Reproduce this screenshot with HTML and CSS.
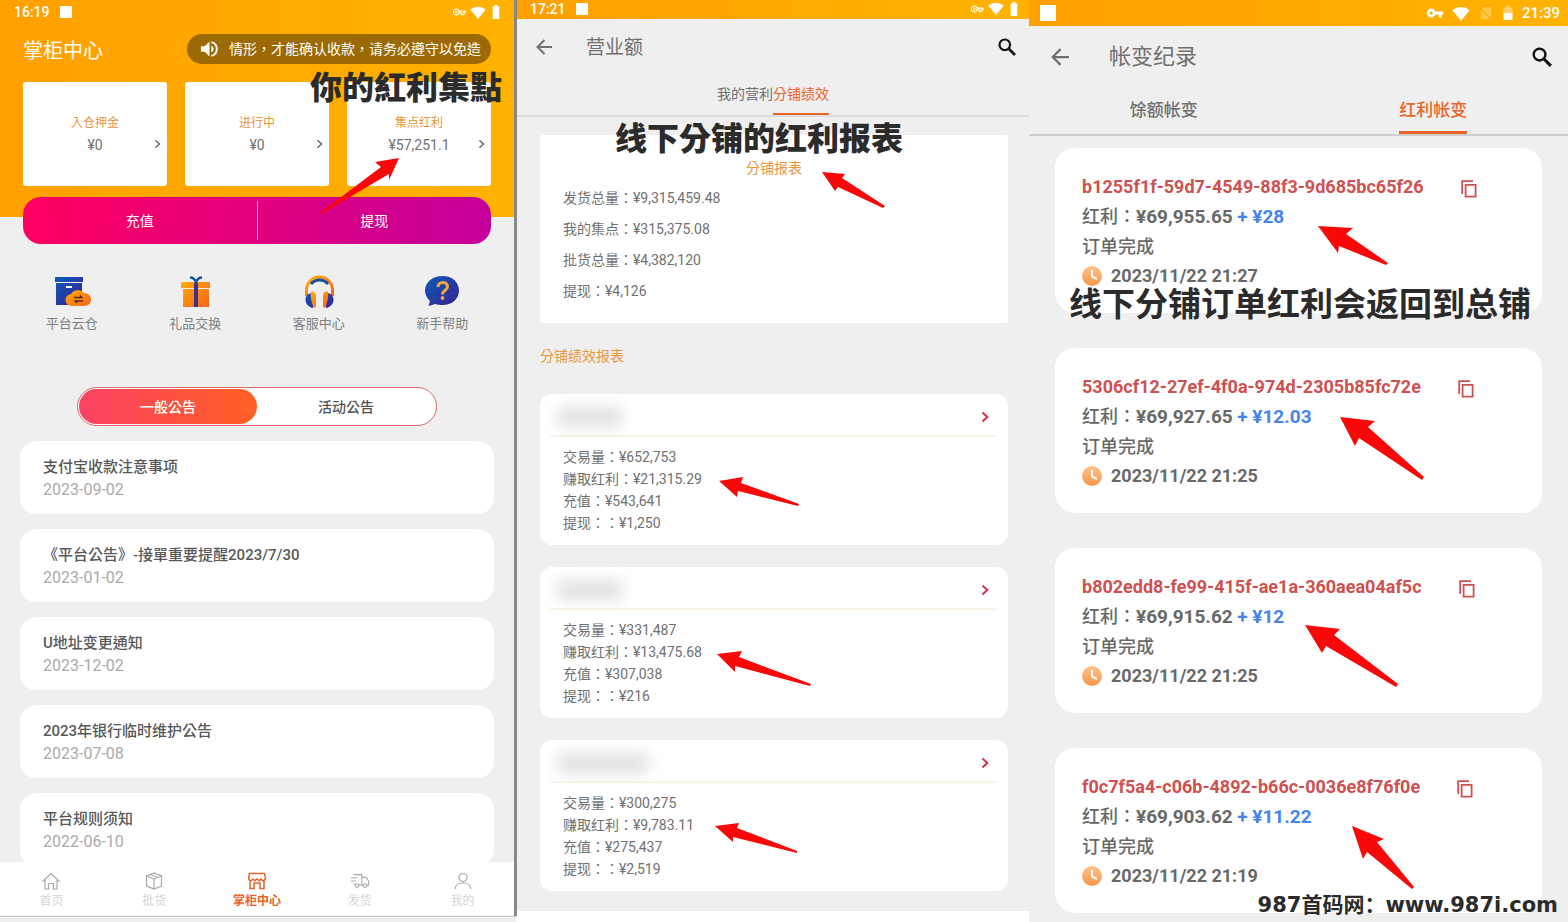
FILE: index.html
```html
<!DOCTYPE html>
<html lang="zh-TW">
<head>
<meta charset="utf-8">
<title>掌柜中心</title>
<link rel="stylesheet" href="styles.css">
</head>
<body>
<svg class="defs" aria-hidden="true">
  <defs>
    <linearGradient id="blue" x1="0" y1="0" x2="1" y2="1"><stop offset="0" stop-color="#0a5cb8"/><stop offset="1" stop-color="#3a2090"/></linearGradient>
    <linearGradient id="orange" x1="0" y1="0" x2="1" y2="1"><stop offset="0" stop-color="#ffad0a"/><stop offset="1" stop-color="#f4631c"/></linearGradient>
    <linearGradient id="peach" x1="0" y1="0" x2="0" y2="1"><stop offset="0" stop-color="#fbc48c"/><stop offset="1" stop-color="#f7964a"/></linearGradient>
    <symbol id="key" viewBox="0 0 24 24"><path fill="currentColor" d="M12.65 10A6 6 0 1 0 12.65 14H17v4h4v-4h2v-4zM7 14a2 2 0 1 1 0-4 2 2 0 0 1 0 4z"/></symbol>
    <symbol id="key-line" viewBox="0 0 24 24"><path fill="none" stroke="currentColor" stroke-width="2" d="M12 10.500A5 5 0 1 0 12 13.500H16v3h4v-3h2.500v-3z"/><circle cx="7.500" cy="12" r="1.600" fill="none" stroke="currentColor" stroke-width="1.600"/></symbol>
    <symbol id="wifi" viewBox="0 0 16 13"><path fill="currentColor" d="M8 13 .3 3.500A12 12 0 0 1 15.700 3.500z"/></symbol>
    <symbol id="battery" viewBox="0 0 8 14"><path fill="currentColor" d="M2.500 0h3v1.500H7.300V14H.7V1.500h1.800z"/></symbol>
    <symbol id="battery-low" viewBox="0 0 10 14"><path fill="currentColor" opacity=".4" d="M3 0h4v1.500h2.500V7h-9V1.500H3z"/><path fill="currentColor" d="M.5 7h9v7h-9z"/></symbol>
    <symbol id="nosim" viewBox="0 0 12 14"><path fill="currentColor" d="M4 1h7v12H1V4z"/><path stroke="#ffa800" stroke-width="1.500" d="M0 2l12 12"/></symbol>
    <symbol id="back" viewBox="0 0 16 16"><path fill="none" stroke="currentColor" stroke-width="2" d="M16 8H2M8.500 1 1.500 8l7 7"/></symbol>
    <symbol id="search" viewBox="0 0 18 18"><circle cx="6.800" cy="6.800" r="5.300" fill="none" stroke="currentColor" stroke-width="2.200"/><path stroke="currentColor" stroke-width="2.800" d="m10.800 10.800 6.200 6.200"/></symbol>
    <symbol id="chev" viewBox="0 0 8 12"><path fill="none" stroke="currentColor" stroke-width="2" d="m1.500 1.500 4.800 4.500-4.800 4.500"/></symbol>
    <symbol id="copy" viewBox="0 0 16 18"><path fill="none" stroke="currentColor" stroke-width="1.800" d="M1.200 14V1.200H12M4.600 4.800h10v11.800h-10z"/></symbol>
    <symbol id="clock" viewBox="0 0 20 20"><circle cx="10" cy="10" r="10" fill="url(#peach)"/><path fill="none" stroke="#fff" stroke-width="2" d="M10 4v6.200l5 3"/></symbol>
  </defs>
</svg>
<div class="board">

  <section class="panel home">
    <div class="hero">
      <div class="status">
        <span>16:19</span><i class="square"></i>
        <svg class="s-key push"><use href="#key-line"/></svg><svg class="s-wifi"><use href="#wifi"/></svg><svg class="s-bat"><use href="#battery"/></svg>
      </div>
      <div class="hero-head">
        <h1>掌柜中心</h1>
        <div class="notice">
          <svg viewBox="0 0 20 18"><path fill="#fff" d="M1 6v6h4l5 5V1L5 6z"/><path fill="#fff" d="M12 5.200v7.600a4.200 4.200 0 0 0 0-7.600z"/><path fill="none" stroke="#fff" stroke-width="2" d="M12 1.800a7.400 7.400 0 0 1 0 14.400"/></svg>
          <span>情形，才能确认收款，请务必遵守以免造</span>
        </div>
      </div>
      <div class="balances">
        <button class="balance"><b>入仓押金</b><span>¥0</span><svg><use href="#chev"/></svg></button>
        <button class="balance"><b>进行中</b><span>¥0</span><svg><use href="#chev"/></svg></button>
        <button class="balance"><b>集点红利</b><span>¥57,251.1</span><svg><use href="#chev"/></svg></button>
      </div>
      <div class="actions"><button>充值</button><button>提现</button></div>
    </div>

    <div class="shortcuts">
      <button>
        <svg viewBox="0 0 36 34"><path fill="url(#blue)" d="M1 2h28v5H1zM2 8h26v22H2z"/><path fill="#fff" d="M12 11h6v2h-6z"/><path fill="url(#orange)" d="M18 31a6 6 0 0 1-1-12 8 8 0 0 1 13-1 6.500 6.500 0 0 1 1 13z"/><path fill="none" stroke="#5a2a30" stroke-width="1.300" d="M20 22.500h8l-2-2M29 26h-8l2 2"/></svg>
        平台云仓</button>
      <button>
        <svg viewBox="0 0 36 34"><path fill="url(#orange)" d="M4 7h29v6H4zM6 14h26v18H6z"/><path fill="#40308a" d="M17 8h4v24h-4z"/><path fill="none" stroke="#1b4fa0" stroke-width="2.500" d="M13 2.500c3 0 5 2 6 5 1-3 3-5 6-5"/></svg>
        礼品交换</button>
      <button>
        <svg viewBox="0 0 36 34"><path fill="none" stroke="url(#orange)" stroke-width="3" d="M5.500 21v-6a12.500 12.500 0 0 1 26 0v6"/><path fill="none" stroke="#174f9f" stroke-width="3" d="M10 9a11 11 0 0 1 17 0"/><path fill="url(#blue)" d="M12 18v15c-4-.5-7.500-4-7.500-8s2-7 7.500-7zM25 18v15c4-.5 7.500-4 7.500-8s-2-7-7.500-7z"/><path fill="url(#orange)" d="M10 16.500c3.500 0 5 1 5 5V32l-2 1c-2-4-4-11-3-16.500zM27 16.500c-3.500 0-5 1-5 5V32l2 1c2-4 4-11 3-16.500z"/></svg>
        客服中心</button>
      <button>
        <svg viewBox="0 0 36 34"><path fill="url(#blue)" d="M18.500 1C28 1 35 7 35 15.500S28 30 18.500 30c-3 0-5-.3-7-1l-7 2 1.500-5C3 23 1 20 1 15.500 1 7 9 1 18.500 1z"/><path fill="none" stroke="#f4a53a" stroke-width="3" d="M14 12c0-6 9.500-6 9.500-.5 0 4-5 3.500-5 8"/><circle cx="18.500" cy="23" r="1.900" fill="#f4a53a"/></svg>
        新手帮助</button>
    </div>

    <div class="segment"><button class="on">一般公告</button><button>活动公告</button></div>

    <div class="news">
      <article><h2>支付宝收款注意事项</h2><time>2023-09-02</time></article>
      <article><h2>《平台公告》-接單重要提醒2023/7/30</h2><time>2023-01-02</time></article>
      <article><h2>U地址变更通知</h2><time>2023-12-02</time></article>
      <article><h2>2023年银行临时维护公告</h2><time>2023-07-08</time></article>
      <article><h2>平台规则须知</h2><time>2022-06-10</time></article>
    </div>

    <nav class="tabbar">
      <a href="#"><svg viewBox="0 0 20 18"><path d="M1.500 9.500 10 1.500l8.500 8M4 8v9h3.500v-5.500h5V17H16V8"/></svg>首页</a>
      <a href="#"><svg viewBox="0 0 20 18"><path d="M10 1 2.500 4v10L10 17l7.500-3V4zM2.500 4 10 7l7.500-3M10 7v10M6.300 2.500l7.500 3"/></svg>批货</a>
      <a href="#" class="on"><svg viewBox="0 0 20 18"><path d="M2.500 1.500h15l1 5-1.500 2.200h-1.300L14 7l-1.800 1.700L10 7 7.800 8.700 6 7 4.300 8.700H3L1.500 6.500zM3 9v7.500h4V11h6v5.500h4V9"/></svg>掌柜中心</a>
      <a href="#"><svg viewBox="0 0 22 18"><path d="M4 2h9v11.500H9.500M13 5h4.500l3 4v4.500h-2.200M1 5.500h7M1 9h5.500M3.500 12.500h2.300M12 13.500h2.500"/><circle cx="7.700" cy="14" r="2"/><circle cx="16.500" cy="14" r="2"/></svg>发货</a>
      <a href="#"><svg viewBox="0 0 20 18"><circle cx="10" cy="5.500" r="4"/><path d="M2 17c.5-8 15.500-8 16 0"/></svg>我的</a>
    </nav>

    <p class="caption cap-home">你的紅利集點</p>
    <svg class="arrows" aria-hidden="true"><path d="M399 158 375 162 381 167 320 213 321 214 389 174 389 180z"/></svg>
  </section>

  <section class="panel report">
    <div class="status">
      <span>17:21</span><i class="square"></i>
      <svg class="s-key push"><use href="#key-line"/></svg><svg class="s-wifi"><use href="#wifi"/></svg><svg class="s-bat"><use href="#battery"/></svg>
    </div>
    <header class="appbar">
      <button aria-label="返回"><svg><use href="#back"/></svg></button><h1>营业额</h1><button class="find" aria-label="搜索"><svg><use href="#search"/></svg></button>
    </header>
    <div class="tabs"><button>我的营利</button><button class="on">分铺绩效</button></div>
    <div class="report-body">
      <div class="summary">
        <h2>分铺报表</h2>
        <p>发货总量：¥9,315,459.48</p><p>我的集点：¥315,375.08</p><p>批货总量：¥4,382,120</p><p>提现：¥4,126</p>
      </div>
      <h2 class="heading">分铺绩效报表</h2>
      <div class="shops">
        <article class="shop"><header><i class="mask"></i><svg><use href="#chev"/></svg></header><p>交易量：¥652,753</p><p>赚取红利：¥21,315.29</p><p>充值：¥543,641</p><p>提现：：¥1,250</p></article>
        <article class="shop"><header><i class="mask"></i><svg><use href="#chev"/></svg></header><p>交易量：¥331,487</p><p>赚取红利：¥13,475.68</p><p>充值：¥307,038</p><p>提现：：¥216</p></article>
        <article class="shop"><header><i class="mask wide"></i><svg><use href="#chev"/></svg></header><p>交易量：¥300,275</p><p>赚取红利：¥9,783.11</p><p>充值：¥275,437</p><p>提现：：¥2,519</p></article>
      </div>
    </div>
    <p class="caption cap-report">线下分铺的红利报表</p>
    <svg class="arrows" aria-hidden="true"><path d="M305 172 328 174 325 178 368 206 366 208 321 187 318 191zM202 481 226 477 224 483 282 504 281 506 221 491 220 497zM200 654 225 651 222 657 294 684 293 686 218 666 218 672zM198 826 222 823 220 828 280 851 280 853 216 837 216 842z"/></svg>
  </section>

  <section class="panel ledger">
    <div class="status">
      <i class="square"></i>
      <svg class="s-key push"><use href="#key"/></svg><svg class="s-wifi"><use href="#wifi"/></svg><svg class="s-sim"><use href="#nosim"/></svg><svg class="s-bat"><use href="#battery-low"/></svg><span>21:39</span>
    </div>
    <header class="appbar">
      <button aria-label="返回"><svg><use href="#back"/></svg></button><h1>帐变纪录</h1><button class="find" aria-label="搜索"><svg><use href="#search"/></svg></button>
    </header>
    <div class="tabs"><button>馀额帐变</button><button class="on">红利帐变</button></div>
    <div class="entries">
      <article><h2>b1255f1f-59d7-4549-88f3-9d685bc65f26<button aria-label="复制"><svg><use href="#copy"/></svg></button></h2><p>红利：<b>¥69,955.65</b> <em>+ ¥28</em></p><p>订单完成</p><p class="when"><svg><use href="#clock"/></svg>2023/11/22 21:27</p></article>
      <article><h2>5306cf12-27ef-4f0a-974d-2305b85fc72e<button aria-label="复制"><svg><use href="#copy"/></svg></button></h2><p>红利：<b>¥69,927.65</b> <em>+ ¥12.03</em></p><p>订单完成</p><p class="when"><svg><use href="#clock"/></svg>2023/11/22 21:25</p></article>
      <article><h2>b802edd8-fe99-415f-ae1a-360aea04af5c<button aria-label="复制"><svg><use href="#copy"/></svg></button></h2><p>红利：<b>¥69,915.62</b> <em>+ ¥12</em></p><p>订单完成</p><p class="when"><svg><use href="#clock"/></svg>2023/11/22 21:25</p></article>
      <article><h2>f0c7f5a4-c06b-4892-b66c-0036e8f76f0e<button aria-label="复制"><svg><use href="#copy"/></svg></button></h2><p>红利：<b>¥69,903.62</b> <em>+ ¥11.22</em></p><p>订单完成</p><p class="when"><svg><use href="#clock"/></svg>2023/11/22 21:19</p></article>
    </div>
    <p class="caption cap-ledger" lang="zh-CN">线下分铺订单红利会返回到总铺</p>
    <p class="watermark" lang="zh-CN">987首码网：www.987i.com</p>
    <svg class="arrows" aria-hidden="true"><path d="M289 226 324 228 317 234 359 263 357 265 310 246 309 253zM311 417 346 421 339 427 395 477 393 480 330 438 326 446zM276 625 311 629 305 635 369 684 367 687 297 646 293 653zM323 826 355 839 348 842 385 887 383 889 338 852 334 859z"/></svg>
  </section>
</div>
</body>
</html>
```
FILE: styles.css
```css
* { box-sizing: border-box; margin: 0; padding: 0; }
body { background: #fff; color: #707070; font: 14px/20px Roboto, "Noto Sans CJK TC", sans-serif; }
button { font: inherit; color: inherit; background: none; border: 0; cursor: pointer; }
h1, h2 { font-weight: 400; }
a { color: inherit; text-decoration: none; }
svg { display: block; flex: none; }
.defs { position: absolute; width: 0; height: 0; }

.board { display: grid; grid-template-columns: 517fr 512fr 539fr; min-height: 100vh; }
.panel { position: relative; background: #efefef; min-width: 0; }

/* status bars */
.status { display: flex; align-items: center; color: #fff; font-weight: 500; background: linear-gradient(90deg, #ffa000, #ffb200); }
.square { width: 12px; height: 12px; background: #fff; border-radius: 1px; margin-left: 10px; }
.push { margin-left: auto; }
.s-key { width: 14px; height: 14px; }
.s-wifi { width: 16px; height: 13px; margin-left: 4px; }
.s-bat { width: 8px; height: 14px; margin-left: 6px; }

/* home */
.home { display: flex; flex-direction: column; border-right: 3px solid #888; margin-bottom: 7px; }
.home::after { content: ""; position: absolute; top: 100%; left: 0; right: -2px; height: 7px; background: #efefef; border-top: 1px solid #ccc; }
.hero { padding: 0 23px; background: linear-gradient(90deg, #ffa000, #ffb200) 0 0 / 100% 217px no-repeat; }
.home .status { height: 24px; margin: 0 -9px; background: none; }
.hero-head { display: flex; align-items: center; justify-content: space-between; height: 30px; margin: 10px 0 18px; }
.hero-head h1 { color: #fff; font-size: 20px; padding-top: 3px; }
.notice { display: flex; align-items: center; gap: 10px; height: 30px; padding: 0 10px 0 13px; border-radius: 15px; background: #9c6a04; color: #fff; white-space: nowrap; }
.notice svg { width: 19px; height: 18px; }
.balances { display: grid; grid-template-columns: repeat(3, 1fr); gap: 18px; }
.balance { position: relative; display: flex; flex-direction: column; align-items: center; justify-content: center; height: 104px; background: #fff; border-radius: 3px; line-height: 22px; }
.balance b { font-weight: 400; font-size: 12px; color: #e8943a; }
.balance svg { position: absolute; right: 6px; top: 57px; width: 7px; height: 10px; }
.actions { display: flex; height: 47px; margin-top: 11px; padding: 4px 0; border-radius: 18px; background: linear-gradient(100deg, #ff0060, #c4009c); color: #fff; }
.actions button { flex: 1; }
.actions button + button { border-left: 1px solid #f5a0d0; }
.shortcuts { display: grid; grid-template-columns: repeat(4, 1fr); padding: 31px 10px 0; font-size: 13px; }
.shortcuts button { display: flex; flex-direction: column; align-items: center; gap: 5px; color: #808080; }
.shortcuts svg { width: 38px; height: 34px; }
.segment { display: flex; width: 70%; height: 39px; margin: 53px auto 15px; padding: 1px; border: 1px solid #e06a6a; border-radius: 20px; background: #fff; font-weight: 500; color: #555; }
.segment button { flex: 1; border-radius: 18px; }
.segment .on { color: #fff; background: linear-gradient(90deg, #fa4263, #ff6024); }
.news { display: grid; gap: 15px; padding: 0 20px; }
.news article { background: #fff; border-radius: 16px; padding: 14px 23px 13px; }
.news h2 { font-size: 15px; line-height: 24px; font-weight: 500; color: #585858; }
.news time { display: block; font-size: 16px; line-height: 22px; color: #aaa; }
.tabbar { display: grid; grid-template-columns: repeat(5, 1fr); position: relative; margin-top: -4px; padding: 10px 0 4px; background: #fff; }
.tabbar a { display: flex; flex-direction: column; align-items: center; gap: 1px; font-size: 12px; color: #d4d4d4; }
.tabbar svg { width: 20px; height: 18px; fill: none; stroke: #a8a8a8; stroke-width: 1.200; }
.tabbar .on { color: #e8642a; font-weight: 700; }
.tabbar .on svg { stroke: #e8642a; stroke-width: 1.500; }

/* app bars and tabs */
.appbar { display: flex; align-items: center; }
.appbar svg { width: 16px; height: 16px; }
.appbar .find { margin-left: auto; color: #151515; }
.appbar .find svg { width: 18px; height: 18px; }
.tabs { display: flex; border-bottom: 2px solid #dcdcdc; }
.tabs button { border-bottom: 2px solid transparent; }
.tabs .on { color: #e8642a; border-color: #e8642a; }

/* branch report */
.report { align-self: start; padding-bottom: 20px; }
.report .status { height: 19px; padding: 0 11px 2px 13px; }
.report .appbar { height: 55px; padding: 0 13px 0 19px; }
.report .appbar h1 { font-size: 19px; margin-left: 34px; padding-top: 2px; }
.report .tabs { justify-content: center; height: 43px; }
.report-body { padding: 18px 21px 0 23px; }
.summary { background: #fff; border-radius: 3px; padding: 18px 23px 16px; }
.summary h2 { font-size: 14px; line-height: 30px; text-align: center; color: #e8943a; }
.summary p { line-height: 31px; }
.heading { font-size: 14px; line-height: 20px; margin: 23px 0 28px; color: #e8943a; }
.shops { display: grid; gap: 22px; }
.shop { background: #fff; border-radius: 12px; padding: 0 23px 11px; line-height: 22px; }
.shop header { display: flex; align-items: center; justify-content: space-between; height: 43px; margin: 0 -13px 9px; padding: 4px 9px 0 8px; border-bottom: 2px solid #faf3ea; color: #d83048; }
.shop header svg { width: 8px; height: 12px; }
.mask { width: 64px; height: 20px; background: #e2e2e2; filter: blur(7px); }
.mask.wide { width: 90px; }

/* ledger */
.ledger { font-weight: 500; }
.ledger .status { height: 26px; padding: 0 8px 0 11px; font-size: 15px; }
.ledger .square { width: 16px; height: 16px; margin-left: 0; }
.ledger .s-key { width: 18px; height: 18px; }
.ledger .s-wifi { width: 18px; height: 15px; margin-left: 8px; }
.s-sim { width: 12px; height: 14px; margin-left: 10px; opacity: .3; }
.ledger .s-bat { width: 12px; margin: 0 8px 0 10px; }
.ledger .appbar { height: 61px; padding: 0 16px 0 22px; }
.ledger .appbar svg { width: 18px; height: 18px; }
.ledger .appbar .find svg { width: 20px; height: 20px; }
.ledger .appbar h1 { font-size: 22px; margin-left: 40px; }
.ledger .tabs { justify-content: space-around; height: 49px; font-size: 17px; border-color: #cecece; }
.ledger .tabs button { border-bottom-width: 3px; padding-top: 2px; }
.entries { display: grid; gap: 35px; padding: 12px 26px 10px; }
.entries article { background: #fff; border-radius: 20px; padding: 24px 27px 23px; font-size: 18px; line-height: 30px; color: #686868; }
.entries h2 { display: flex; align-items: center; gap: 37px; font-size: 18px; font-weight: 700; color: #cf5050; }
.entries h2 button { padding-top: 4px; }
.entries h2 svg { width: 16px; height: 18px; }
.entries b, .entries em { font-size: 19px; line-height: 28px; font-style: normal; font-weight: 700; }
.entries em { color: #4585ea; }
.entries .when { display: flex; align-items: center; gap: 9px; line-height: 28px; font-weight: 700; }
.when svg { width: 20px; height: 20px; }

/* annotations laid over the panels */
.caption { position: absolute; font-family: "Noto Sans CJK TC", sans-serif; font-weight: 900; font-size: 32px; line-height: 36px; color: #2b2b2b; white-space: nowrap; }
.cap-home { left: 310px; top: 67px; z-index: 2; }
.cap-report { left: 98px; top: 118px; }
.cap-ledger { left: 40px; top: 284px; font-family: "Noto Sans CJK SC", sans-serif; font-size: 33px; font-weight: 700; }
.watermark { position: absolute; right: 10px; bottom: 6px; font: 700 21px/24px "DejaVu Sans", "Noto Sans CJK SC", sans-serif; color: #2b2b2b; white-space: nowrap; }
.arrows { position: absolute; inset: 0; width: 100%; height: 100%; fill: #f80808; pointer-events: none; }
```
